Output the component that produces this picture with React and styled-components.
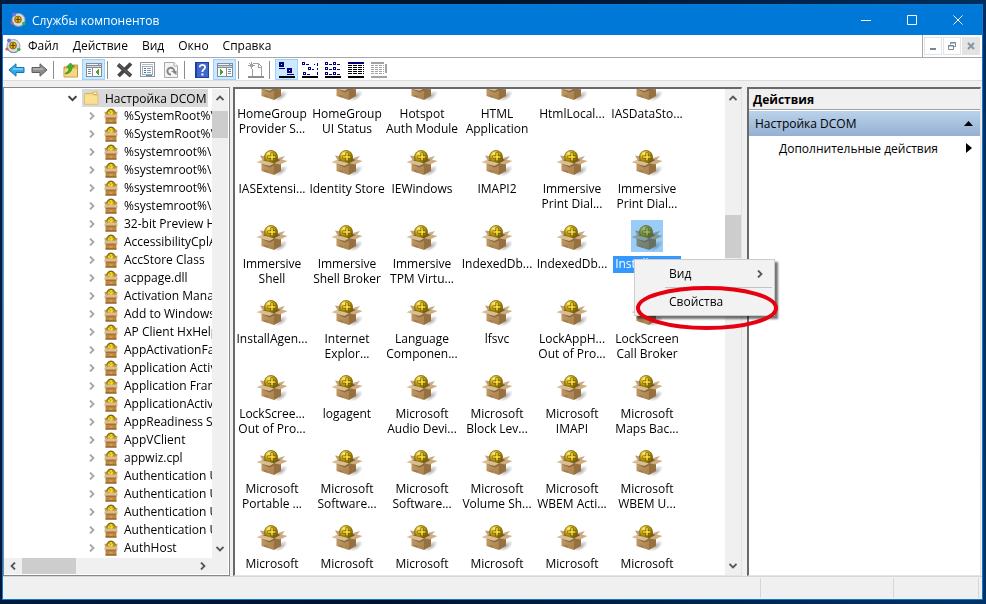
import React from 'react'
import styled, { createGlobalStyle, css } from 'styled-components'

const GlobalStyle = createGlobalStyle`
  * {
    box-sizing: border-box;
  }

  body {
    background: linear-gradient(100deg, #001c40 0%, #00132e 45%, #003468 100%);
    color: #000;
    font-family: 'Open Sans', 'Noto Sans', sans-serif;
    font-size: 12px;
    line-height: 15px;
    margin: 0;
  }

  button {
    background: none;
    border: 0;
    color: inherit;
    font: inherit;
    padding: 0;
  }

  ul {
    list-style: none;
    margin: 0;
    padding: 0;
  }

  svg {
    display: block;
    flex: none;
  }
`

/* Window frame */

const Desktop = styled.div`
  display: flex;
  height: 100vh;
  padding: 4px 3px 4px 2px;
`

const Window = styled.main`
  background: #f0f0f0;
  border: 1px solid #0f78cf;
  display: flex;
  flex: 1;
  flex-direction: column;
  min-width: 0;
`

const TitleBar = styled.header`
  align-items: center;
  background: #0078d7;
  color: #fff;
  display: flex;
  flex: none;
  height: 30px;
  padding: 0 1px 0 7px;
`

const Title = styled.h1`
  flex: 1;
  font-size: 12px;
  font-weight: 400;
  margin: 0 0 0 6px;
`

const CaptionButton = styled.button`
  align-items: center;
  display: flex;
  height: 30px;
  justify-content: center;
  width: 46px;
`

const MenuBar = styled.nav`
  align-items: center;
  background: #fff;
  border-bottom: 1px solid #a8a8a8;
  display: flex;
  flex: none;
  height: 23px;
  padding-left: 2px;
`

const MenuButton = styled.button`
  height: 22px;
  padding: 0 7px 1px;
`

const MdiButtons = styled.div`
  border-left: 1px solid #a8a8a8;
  display: flex;
  gap: 1px;
  height: 22px;
  margin-left: auto;
  padding: 2px 2px 2px 1px;
`

const MdiButton = styled.button`
  align-items: center;
  background: ${props => (props.$filled ? '#e3e3e3' : '#fff')};
  border: 1px solid #e3e3e3;
  display: flex;
  height: 18px;
  justify-content: center;
  width: 18px;
`

const Toolbar = styled.div`
  background: #fff;
  border-bottom: 1px solid #dcdcdc;
  display: flex;
  flex: none;
  height: 23px;
  padding: 1px 2px;
`

const ToolButton = styled.button`
  align-items: center;
  background: ${props => (props.$active ? '#cce8ff' : 'transparent')};
  border: 1px solid ${props => (props.$active ? '#99d1ff' : 'transparent')};
  display: flex;
  height: 21px;
  justify-content: center;
  width: 23px;
`

const Separator = styled.span`
  background: #8c8c8c;
  height: 18px;
  margin: 2px 5px 0 2px;
  width: 1px;
`

/* Panes */

const Panes = styled.div`
  display: grid;
  flex: 1;
  gap: 3px;
  grid-template-columns: 227px minmax(0, 1fr) 236px;
  min-height: 0;
  padding: 6px 1px 0 0;
`

const TreePane = styled.section`
  background: #fff;
  border: 1px solid #828790;
  display: grid;
  grid-template-columns: minmax(0, 1fr) 16px;
  grid-template-rows: minmax(0, 1fr) 16px;
  min-height: 0;
  padding: 1px 1px 1px 0;
`

const TreeScroller = styled.div`
  overflow: hidden;
`

const TreeRow = styled.div`
  align-items: center;
  display: flex;
  height: 18px;
  padding-left: ${props => (props.$root ? 64 : 84)}px;
  white-space: nowrap;
`

const TreeIcon = styled.span`
  margin-left: 8px;
`

const TreeLabel = styled.span`
  margin-left: 6px;
  padding-bottom: 2px;
`

const RootLabel = styled.span`
  align-items: center;
  background: #d9d9d9;
  display: flex;
  gap: 6px;
  height: 18px;
  margin-left: 5px;
  padding: 0 2px;
`

const SunkenPane = styled.section`
  background: #fff;
  border: solid;
  border-color: #696969 #e3e3e3 #e3e3e3 #696969;
  border-width: 2px 1px 1px 2px;
  display: flex;
  min-height: 0;
  min-width: 0;
  position: relative;
`

const ListScroller = styled.div`
  flex: 1;
  min-width: 0;
  overflow: hidden;
`

const IconGrid = styled.ul`
  display: grid;
  grid-auto-rows: 75px;
  grid-template-columns: repeat(6, 75px);
  /* the list is scrolled down by part of a row */
  margin-top: -19px;
`

const GridItem = styled.li`
  align-items: center;
  display: flex;
  flex-direction: column;
  padding-right: 1px;
  text-align: center;
`

const GridIcon = styled.span`
  background: ${props => (props.$selected ? '#99ccf7' : 'transparent')};

  svg {
    mix-blend-mode: ${props => (props.$selected ? 'multiply' : 'normal')};
    opacity: ${props => (props.$selected ? 0.8 : 1)};
  }
`

const GridLabel = styled.span`
  margin-top: 4px;
  padding: 0 2px 2px;
  white-space: pre;

  ${props =>
    props.$selected &&
    css`
      background: #3399ff;
      color: #fff;
    `}
`

const ActionsPane = styled(SunkenPane)`
  flex-direction: column;
  margin-left: 2px;
`

const ActionsTitle = styled.h2`
  background: #f0f0f0;
  border-bottom: 1px solid #a0a0a0;
  flex: none;
  font-size: 12px;
  font-weight: 700;
  height: 21px;
  line-height: 21px;
  margin: 0 0 1px;
  padding-left: 4px;
`

const ActionsGroup = styled.button`
  align-items: center;
  background: linear-gradient(#bad2ea, #95b0d3);
  display: flex;
  flex: none;
  height: 25px;
  justify-content: space-between;
  padding: 0 7px 0 6px;
`

const ActionsLink = styled.button`
  align-items: center;
  display: flex;
  height: 24px;
  justify-content: space-between;
  padding: 0 8px 0 30px;
`

const StatusBar = styled.footer`
  border-top: 1px solid #d7d7d7;
  display: flex;
  flex: none;
  height: 23px;
  justify-content: flex-end;
  padding: 1px 3px 1px 0;
`

const StatusCell = styled.span`
  border-right: 1px solid #d7d7d7;
  flex: ${props => (props.$width ? 'none' : 1)};
  width: ${props => props.$width || 0}px;
`

/* Scroll bars */

const ScrollTrack = styled.div`
  align-items: stretch;
  background: #f0f0f0;
  display: flex;
  flex: none;
  flex-direction: ${props => (props.$horizontal ? 'row' : 'column')};
  ${props => (props.$horizontal ? 'height' : 'width')}: 16px;
`

const ScrollButton = styled.button`
  align-items: center;
  display: flex;
  flex: none;
  height: ${props => (props.$horizontal ? 16 : 18)}px;
  justify-content: center;
  width: ${props => (props.$horizontal ? 18 : 16)}px;
`

const ScrollSpace = styled.div`
  flex: ${props => props.$grow};
`

const ScrollThumb = styled.div`
  background: #cdcdcd;
  flex: none;
  ${props => (props.$horizontal ? 'width' : 'height')}: ${props =>
    props.$size}px;
`

/* Context menu and the mark over it */

const ContextMenu = styled.div`
  background: #f2f2f2;
  border: 1px solid #ccc;
  box-shadow: 3px 3px 2px rgba(0, 0, 0, 0.55);
  display: flex;
  flex-direction: column;
  height: 57px;
  left: 399px;
  position: absolute;
  top: 170px;
  width: 141px;
  z-index: 1;
`

const ContextItem = styled.button`
  align-items: center;
  display: flex;
  flex: 1;
  justify-content: space-between;
  padding: 0 10px 0 34px;
`

const ContextDivider = styled.hr`
  border: 0;
  border-top: 1px solid #c4c4c4;
  margin: 0 2px 0 30px;
`

const Mark = styled.svg`
  left: 399px;
  position: absolute;
  top: 196px;
  z-index: 2;
`

const Chevron = ({ direction, color = '#555', size = 8 }) => {
  const turn = { right: 0, down: 90, left: 180, up: 270 }[direction]

  return (
    <svg width={size} height={size} viewBox="0 0 8 8">
      <path
        d="M2 0.5 L5.5 4 L2 7.5"
        fill="none"
        stroke={color}
        strokeWidth="1.8"
        transform={`rotate(${turn} 4 4)`}
      />
    </svg>
  )
}

const AppIcon = () => (
  <svg width="16" height="16" viewBox="0 0 16 16">
    <circle cx="8.5" cy="8" r="6.5" fill="#d7dde3" stroke="#8fa5b8" />
    <path d="M3 12 A7 7 0 0 0 14 12" fill="none" stroke="#6d8aa5" />
    <circle cx="8" cy="7.5" r="3.4" fill="#e8b70f" stroke="#8a6508" />
    <path d="M8 5 V10 M5.5 7.5 H10.5" stroke="#614607" strokeWidth="1.2" />
    <circle cx="4" cy="2.5" r="2" fill="#6d72e0" />
    <circle cx="2" cy="11" r="1.6" fill="#d9536a" />
    <circle cx="13.8" cy="11.5" r="1.8" fill="#3fae52" />
  </svg>
)

const BoxIcon = () => (
  <svg width="32" height="32" viewBox="0 0 32 32">
    <defs>
      <radialGradient id="coin" cx="0.35" cy="0.25" r="0.8">
        <stop offset="0" stopColor="#fff08a" />
        <stop offset="0.4" stopColor="#d2ab14" />
        <stop offset="1" stopColor="#665000" />
      </radialGradient>
      <linearGradient id="front" x2="1" y2="1">
        <stop offset="0" stopColor="#c49d69" />
        <stop offset="1" stopColor="#a7814e" />
      </linearGradient>
      <radialGradient id="shade">
        <stop offset="0" stopColor="#000" stopOpacity="0.32" />
        <stop offset="1" stopColor="#000" stopOpacity="0" />
      </radialGradient>
    </defs>
    <ellipse
      cx="25"
      cy="26"
      rx="8"
      ry="4"
      fill="url(#shade)"
      transform="rotate(-35 25 26)"
    />
    <path d="M4 10.5 L11 11.5 L12 17 L7 16 Z" fill="#bda07a" />
    <path d="M18 14 L29 11 L25 16 L18 18 Z" fill="#c9ac84" />
    <path d="M6 16 L15 12 L25 15 L18 20 Z" fill="#775b38" />
    <circle cx="15" cy="12" r="6.8" fill="url(#coin)" />
    <circle
      cx="15"
      cy="12"
      r="6.4"
      fill="none"
      stroke="#7c6405"
      strokeWidth="0.8"
    />
    <path d="M16 7.5 V16 M11.5 12 H20" stroke="#6b5300" strokeWidth="3" />
    <path d="M16 8 V15.5 M12 12 H19.5" stroke="#ffe63e" strokeWidth="1.5" />
    <path d="M5.5 16 L18 19 V30 L5.5 26 Z" fill="url(#front)" />
    <path d="M18 19 L25 15.5 V26 L18 30 Z" fill="#96703f" />
    <path d="M5.5 15 L18 18.3 L13.5 21 L0.5 17.3 Z" fill="#d9bd94" />
    <path d="M18 18.3 L25.5 14.5 L31.5 16 L24 19.5 Z" fill="#cdac7e" />
    <path d="M5.5 19 L13.5 21 L18 18.8 V20.5 L13.5 22.5 Z" fill="#8b683e" />
    <path d="M9 27 V25 M11 27.6 V25.6" stroke="#8b683e" strokeWidth="0.8" />
  </svg>
)

const SmallBoxIcon = () => (
  <svg width="14" height="16" viewBox="0 0 14 16">
    <circle cx="7" cy="5.5" r="4.4" fill="#c4a008" stroke="#5d4900" />
    <path
      d="M7 2 V7 M4 4.8 H10"
      stroke="#ffe84a"
      strokeWidth="1.3"
      strokeDasharray="2 1"
    />
    <path d="M0.5 3.5 L3 5 V7 H1 Z" fill="#bb9463" />
    <path d="M13.5 3.5 L11 5 V7 H13 Z" fill="#bb9463" />
    <path d="M1.5 8 H12.5 V15.5 H1.5 Z" fill="#bd8742" />
    <path d="M1.5 9.5 H12.5 V10.5 H1.5 Z" fill="#8e5f28" />
    <path d="M1 6.5 H13 L14 9.5 H0 Z" fill="#dcbd90" />
    <path d="M1.5 15 H12.5" stroke="#80521d" />
    <path d="M5.5 13 H8.5" stroke="#e0b373" />
  </svg>
)

const FolderIcon = () => (
  <svg width="15" height="14" viewBox="0 0 15 14">
    <path d="M1 2 L8 2 L9 0.5 H13.5 V12 H1 Z" fill="#dcb04d" />
    <path d="M9.5 1.5 H12.5 V3 H9.5 Z" fill="#fff6cf" />
    <path
      d="M0.5 2.8 H8.5 L9.5 4 H14 V13.3 H0.5 Z"
      fill="#fae08f"
      stroke="#d9b35a"
      strokeWidth="0.7"
    />
  </svg>
)

const ArrowIcon = ({ forward }) => (
  <svg width="17" height="16" viewBox="0 0 17 16">
    <path
      d="M1 8 L8 1.8 V5.5 H16 V10.5 H8 V14.2 Z"
      fill={forward ? '#8e8e8e' : '#35a9e8'}
      stroke={forward ? '#5e5e5e' : '#1675ad'}
      transform={forward ? 'rotate(180 8.5 8)' : undefined}
    />
    <path
      d={forward ? 'M2 7 H12' : 'M5 7 H15'}
      stroke={forward ? '#b9b9b9' : '#86d4fa'}
      strokeWidth="1.5"
    />
  </svg>
)

const UpFolderIcon = () => (
  <svg width="16" height="16" viewBox="0 0 16 16">
    <path d="M1 5 H8 L10 3 H14.5 V15 H1 Z" fill="#e6bb59" stroke="#c4963c" />
    <path d="M1.5 7 H14 V14.5 H1.5 Z" fill="#f6d782" />
    <path
      d="M2.5 11 C5.5 10 6 8 6 5 H3.5 L7.5 1 L11.5 5 H9 C9 9 7 11.5 2.5 12 Z"
      fill="#42b52a"
      stroke="#27851a"
      strokeWidth="0.6"
    />
  </svg>
)

const PaneIcon = ({ right }) => (
  <svg width="16" height="14" viewBox="0 0 16 14" shapeRendering="crispEdges">
    <rect width="16" height="14" fill="#858c96" />
    <rect x="1" y="1" width="11" height="1" fill="#f1f3f5" />
    <rect x="13" y="1" width="2" height="1" fill="#dfe3e8" />
    <rect x="1" y="3" width="14" height="1" fill="#cfd4da" />
    <rect x="1" y="5" width={right ? 8 : 5} height="8" fill="#fff" />
    <rect x={right ? 10 : 7} y="5" width={right ? 5 : 8} height="8" fill="#fff" />
    <path
      d={
        right
          ? 'M11 6.5 H14 M11 8.5 H14 M11 10.5 H14'
          : 'M2 6.5 H5 M2 8.5 H5 M2 10.5 H5'
      }
      stroke="#72869c"
    />
    <path d={right ? 'M3 6 L7 9 L3 12 Z' : 'M13 6 L9 9 L13 12 Z'} fill="#42a52c" />
  </svg>
)

const DeleteIcon = () => (
  <svg width="17" height="16" viewBox="0 0 17 16">
    <path
      d="M2 2.5 L15 14 M15 1.5 L2.5 14"
      stroke="#464646"
      strokeWidth="3.8"
    />
    <path d="M2.5 2.5 L14 13" stroke="#777" strokeWidth="0.8" />
  </svg>
)

const PropertiesIcon = () => (
  <svg width="16" height="16" viewBox="0 0 16 16" shapeRendering="crispEdges">
    <rect x="0.5" y="0.5" width="14" height="14" fill="#fff" stroke="#8d959d" />
    <path d="M2 2.5 H13" stroke="#b5bcc4" />
    <rect x="2.5" y="4.5" width="10" height="8" fill="#fff" stroke="#a4acb5" />
    <path d="M4 6.5 H6 M4 8.5 H6 M4 10.5 H6" stroke="#3d6fba" />
    <path d="M7 6.5 H11 M7 8.5 H11 M7 10.5 H11" stroke="#939ca6" />
    <path d="M6 13.5 H12" stroke="#3e9bd0" />
  </svg>
)

const RefreshIcon = () => (
  <svg width="14" height="16" viewBox="0 0 14 16">
    <path d="M0.5 0.5 H10 L13.5 4 V15.5 H0.5 Z" fill="#f3f3f3" stroke="#aaa" />
    <path d="M10 0.5 V4 H13.5" fill="#fff" stroke="#aaa" />
    <path
      d="M7 12.5 A3.4 3.4 0 1 1 10.2 9"
      fill="none"
      stroke="#858585"
      strokeWidth="2"
    />
    <path d="M7 9 H12.5 V13 Z" fill="#858585" />
  </svg>
)

const HelpIcon = () => (
  <svg width="14" height="16" viewBox="0 0 14 16">
    <rect width="14" height="16" fill="#1f3f9c" />
    <rect x="2" y="1" width="11" height="14" fill="#4168cc" />
    <path
      d="M4.7 5.2 C4.7 2.2 10.3 2.2 10.1 5.3 C10 7.5 7.3 7.3 7.3 10"
      fill="none"
      stroke="#fff"
      strokeWidth="1.8"
    />
    <rect x="6.4" y="11.5" width="2" height="2" fill="#fff" />
  </svg>
)

const NewIcon = () => (
  <svg width="16" height="16" viewBox="0 0 16 16" shapeRendering="crispEdges">
    <path d="M4.5 14 V7 M6 1.5 H10.5 L13.5 4.5 V14" fill="none" stroke="#a0a0a0" />
    <path d="M10.5 2 V5 H13.5" fill="none" stroke="#a0a0a0" />
    <path
      d="M0 3.5 H7 M3.5 0 V7 M1.5 1.5 L5.5 5.5 M5.5 1.5 L1.5 5.5"
      stroke="#a0a0a0"
    />
    <path d="M0 15 H16" stroke="#8f8f8f" strokeWidth="2" />
  </svg>
)

const viewMarks = {
  large: (
    <>
      <path d="M1 1 H4 V4 H1 Z M9 7 H12 V10 H9 Z" strokeWidth="2" />
      <path d="M0 6.5 H6 M8 12.5 H15" />
    </>
  ),
  small: (
    <>
      <path d="M0.5 0.5 H2.5 V2.5 H0.5 Z M6.5 5.5 H8.5 V7.5 H6.5 Z M1.5 10.5 H3.5 V12.5 H1.5 Z" />
      <path d="M4 2.5 H7 M10 7.5 H12 M5 12.5 H8 M12 2.5 H13 M15.5 1 V4 M15.5 6 V8 M15.5 10 V13" />
    </>
  ),
  list: (
    <>
      <path d="M0.5 0.5 H2.5 V2.5 H0.5 Z M0.5 5.5 H2.5 V7.5 H0.5 Z M0.5 10.5 H2.5 V12.5 H0.5 Z" />
      <path d="M8.5 0.5 H10.5 V2.5 H8.5 Z M8.5 5.5 H10.5 V7.5 H8.5 Z M8.5 10.5 H10.5 V12.5 H8.5 Z" />
      <path d="M4 2.5 H7 M12 2.5 H15 M4 7.5 H7 M12 7.5 H15 M4 12.5 H7 M12 12.5 H15" />
    </>
  ),
  details: (
    <>
      <path d="M0 1 H16" strokeWidth="2" />
      <path
        d="M0 3.5 H16 M0 5.5 H16 M0 7.5 H16 M0 9.5 H16 M0 11.5 H16"
        strokeDasharray="4 1"
        stroke="#000"
      />
    </>
  ),
  filtered: (
    <>
      <path d="M0 0.5 H13 M15 2 V11" strokeWidth="2" />
      <path
        d="M0 3.5 H13 M0 5.5 H13 M0 7.5 H13 M0 9.5 H13 M0 11.5 H13"
        strokeDasharray="3 1"
      />
    </>
  ),
}

const ViewIcon = ({ kind }) => {
  const muted = kind === 'filtered'

  return (
    <svg width="16" height="16" viewBox="0 0 16 16" shapeRendering="crispEdges">
      <g fill="none" stroke={muted ? '#a2a2a2' : '#000080'}>
        {viewMarks[kind]}
      </g>
      <path d="M0 15 H16" stroke={muted ? '#a2a2a2' : '#000'} strokeWidth="2" />
    </svg>
  )
}

const captionButtons = [
  ['Свернуть', 'M0 5.5 H10'],
  ['Развернуть', 'M0.5 0.5 H9.5 V9.5 H0.5 Z'],
  ['Закрыть', 'M0.5 0.5 L9.5 9.5 M9.5 0.5 L0.5 9.5'],
]

const menus = ['Файл', 'Действие', 'Вид', 'Окно', 'Справка']

const tools = [
  ['Назад', <ArrowIcon />],
  ['Вперед', <ArrowIcon forward />],
  null,
  ['Вверх', <UpFolderIcon />],
  ['Дерево консоли', <PaneIcon />, true],
  null,
  ['Удалить', <DeleteIcon />],
  ['Свойства', <PropertiesIcon />],
  ['Обновить', <RefreshIcon />],
  null,
  ['Справка', <HelpIcon />],
  ['Панель действий', <PaneIcon right />, true],
  null,
  ['Создать', <NewIcon />],
  null,
  ['Крупные значки', <ViewIcon kind="large" />, true],
  ['Мелкие значки', <ViewIcon kind="small" />],
  ['Список', <ViewIcon kind="list" />],
  ['Таблица', <ViewIcon kind="details" />],
  ['Состояние', <ViewIcon kind="filtered" />],
]

const treeItems = [
  '%SystemRoot%\\system32',
  '%SystemRoot%\\system32',
  '%systemroot%\\system32',
  '%systemroot%\\system32',
  '%systemroot%\\System32',
  '%systemroot%\\System32',
  '32-bit Preview Handler',
  'AccessibilityCplAdmin',
  'AccStore Class',
  'acppage.dll',
  'Activation Manager',
  'Add to Windows',
  'AP Client HxHelpPane',
  'AppActivationFactory',
  'Application Activation',
  'Application Frame',
  'ApplicationActivation',
  'AppReadiness Service',
  'AppVClient',
  'appwiz.cpl',
  'Authentication UI',
  'Authentication UI',
  'Authentication UI',
  'Authentication UI',
  'AuthHost',
]

const components = [
  'HomeGroup\nProvider S...',
  'HomeGroup\nUI Status',
  'Hotspot\nAuth Module',
  'HTML\nApplication',
  'HtmlLocal...',
  'IASDataSto...',
  'IASExtensi...',
  'Identity Store',
  'IEWindows',
  'IMAPI2',
  'Immersive\nPrint Dial...',
  'Immersive\nPrint Dial...',
  'Immersive\nShell',
  'Immersive\nShell Broker',
  'Immersive\nTPM Virtu...',
  'IndexedDb...',
  'IndexedDb...',
  'InstallAge...',
  'InstallAgen...',
  'Internet\nExplor...',
  'Language\nComponen...',
  'lfsvc',
  'LockAppH...\nOut of Pro...',
  'LockScreen\nCall Broker',
  'LockScree...\nOut of Pro...',
  'logagent',
  'Microsoft\nAudio Devi...',
  'Microsoft\nBlock Lev...',
  'Microsoft\nIMAPI',
  'Microsoft\nMaps Bac...',
  'Microsoft\nPortable ...',
  'Microsoft\nSoftware...',
  'Microsoft\nSoftware...',
  'Microsoft\nVolume Sh...',
  'Microsoft\nWBEM Acti...',
  'Microsoft\nWBEM U...',
  'Microsoft',
  'Microsoft',
  'Microsoft',
  'Microsoft',
  'Microsoft',
  'Microsoft',
]

const SELECTED = 17

const ScrollBar = ({ horizontal, thumb, before, after }) => (
  <ScrollTrack $horizontal={horizontal}>
    <ScrollButton
      $horizontal={horizontal}
      aria-label={horizontal ? 'Влево' : 'Вверх'}
    >
      <Chevron direction={horizontal ? 'left' : 'up'} />
    </ScrollButton>
    <ScrollSpace $grow={before} />
    <ScrollThumb $horizontal={horizontal} $size={thumb} />
    <ScrollSpace $grow={after} />
    <ScrollButton
      $horizontal={horizontal}
      aria-label={horizontal ? 'Вправо' : 'Вниз'}
    >
      <Chevron direction={horizontal ? 'right' : 'down'} />
    </ScrollButton>
  </ScrollTrack>
)

const Tree = () => (
  <TreePane aria-label="Дерево консоли">
    <TreeScroller>
      <TreeRow $root>
        <Chevron direction="down" color="#404040" size={9} />
        <RootLabel>
          <FolderIcon />
          Настройка DCOM
        </RootLabel>
      </TreeRow>
      <ul>
        {treeItems.map((name, i) => (
          <li key={i}>
            <TreeRow>
              <Chevron direction="right" color="#a6a6a6" />
              <TreeIcon>
                <SmallBoxIcon />
              </TreeIcon>
              <TreeLabel>{name}</TreeLabel>
            </TreeRow>
          </li>
        ))}
      </ul>
    </TreeScroller>
    <ScrollBar thumb={27} before={1} after={99} />
    <ScrollBar horizontal thumb={54} before={0} after={1} />
    <ScrollTrack />
  </TreePane>
)

const ComponentList = () => (
  <SunkenPane aria-label="Компоненты">
    <ListScroller>
      <IconGrid>
        {components.map((name, i) => (
          <GridItem key={i}>
            <GridIcon $selected={i === SELECTED}>
              <BoxIcon />
            </GridIcon>
            <GridLabel $selected={i === SELECTED}>{name}</GridLabel>
          </GridItem>
        ))}
      </IconGrid>
    </ListScroller>
    <ScrollBar thumb={43} before={107} after={297} />
    <ContextMenu>
      <ContextItem>
        Вид
        <Chevron direction="right" />
      </ContextItem>
      <ContextDivider />
      <ContextItem>Свойства</ContextItem>
    </ContextMenu>
    <Mark width="144" height="46" viewBox="0 0 144 46">
      <ellipse
        cx="73"
        cy="23"
        rx="69"
        ry="20"
        fill="none"
        stroke="#e60012"
        strokeWidth="4"
      />
    </Mark>
  </SunkenPane>
)

const Actions = () => (
  <ActionsPane>
    <ActionsTitle>Действия</ActionsTitle>
    <ActionsGroup>
      Настройка DCOM
      <svg width="9" height="5" viewBox="0 0 9 5">
        <path d="M0 5 L4.5 0 L9 5 Z" />
      </svg>
    </ActionsGroup>
    <ActionsLink>
      Дополнительные действия
      <svg width="6" height="10" viewBox="0 0 6 10">
        <path d="M0 0 L6 5 L0 10 Z" />
      </svg>
    </ActionsLink>
  </ActionsPane>
)

const App = () => (
  <Desktop>
    <GlobalStyle />
    <Window>
      <TitleBar>
        <AppIcon />
        <Title>Службы компонентов</Title>
        {captionButtons.map(([label, d]) => (
          <CaptionButton key={label} aria-label={label}>
            <svg width="10" height="10" viewBox="0 0 10 10">
              <path d={d} fill="none" stroke="#fff" />
            </svg>
          </CaptionButton>
        ))}
      </TitleBar>

      <MenuBar>
        <AppIcon />
        {menus.map(label => (
          <MenuButton key={label}>{label}</MenuButton>
        ))}
        <MdiButtons>
          <MdiButton aria-label="Свернуть окно">
            <svg width="8" height="8" viewBox="0 0 8 8">
              <path d="M1 7 H7" stroke="#77879a" strokeWidth="2" />
            </svg>
          </MdiButton>
          <MdiButton aria-label="Восстановить окно">
            <svg width="8" height="8" viewBox="0 0 8 8">
              <g fill="none" stroke="#77879a">
                <path d="M2.5 2.5 V0.5 H7.5 V4.5 H6" />
                <path d="M0.5 3 V7.5 H5.5 V3.5 H0.5" />
                <path d="M2 1 H8 M0 4 H6" />
              </g>
            </svg>
          </MdiButton>
          <MdiButton $filled aria-label="Закрыть окно">
            <svg width="8" height="8" viewBox="0 0 8 8">
              <path
                d="M1 1 L7 7 M7 1 L1 7"
                stroke="#8795a5"
                strokeWidth="2"
              />
            </svg>
          </MdiButton>
        </MdiButtons>
      </MenuBar>

      <Toolbar>
        {tools.map((tool, i) =>
          tool ? (
            <ToolButton key={i} $active={tool[2]} aria-label={tool[0]}>
              {tool[1]}
            </ToolButton>
          ) : (
            <Separator key={i} />
          ),
        )}
      </Toolbar>

      <Panes>
        <Tree />
        <ComponentList />
        <Actions />
      </Panes>

      <StatusBar>
        <StatusCell />
        <StatusCell $width={133} />
        <StatusCell $width={85} />
      </StatusBar>
    </Window>
  </Desktop>
)

export default App
